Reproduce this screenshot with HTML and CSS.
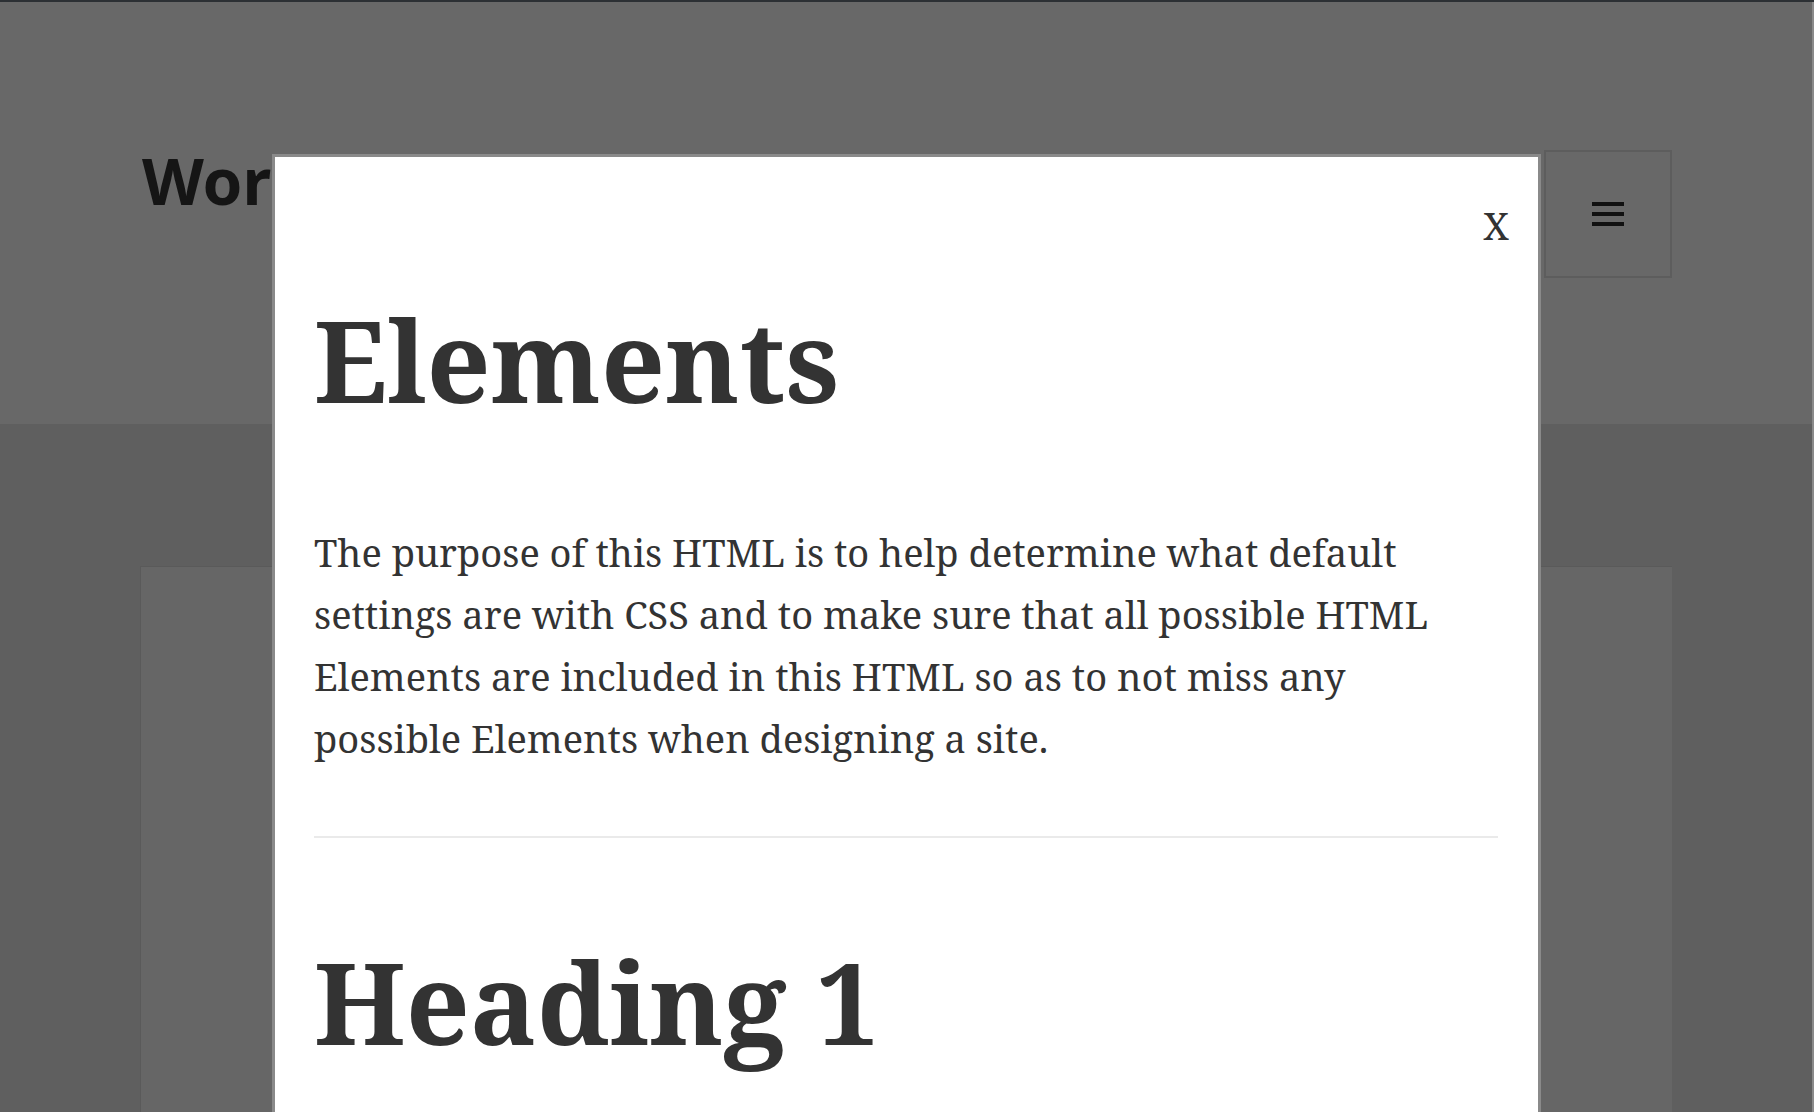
FILE: index.html
```html
<!DOCTYPE html>
<html lang="en">
<head>
<meta charset="utf-8">
<title>Elements</title>
<link rel="stylesheet" href="styles.css">
</head>
<body>
<div class="topbar"></div>
<header class="site-header">
  <p class="site-title">WordPress Theme Elements</p>
  <button class="menu-toggle" aria-label="Menu">
    <svg width="32" height="26" viewBox="0 0 32 26"><rect x="0" y="0" width="32" height="4" fill="#111"/><rect x="0" y="10" width="32" height="4" fill="#111"/><rect x="0" y="20" width="32" height="4" fill="#111"/></svg>
  </button>
</header>
<main class="site-main">
  <article class="card"></article>
</main>
<div class="modal">
  <button class="close">X</button>
  <div class="modal-body">
    <h1 class="entry-title">Elements</h1>
    <p class="lead">The purpose of this HTML is to help determine what default settings are with CSS and to make sure that all possible HTML Elements are included in this HTML so as to not miss any possible Elements when designing a site.</p>
    <hr class="rule">
    <h1 class="h1">Heading 1</h1>
  </div>
</div>
</body>
</html>
```

FILE: styles.css
```css
html, body {
  margin: 0;
  padding: 0;
  height: 100%;
  overflow: hidden;
}
body {
  background: #5f5f5f;
  font-family: "Noto Serif", "DejaVu Serif", serif;
  position: relative;
}
.topbar {
  height: 2px;
  background: #2c3034;
}
.site-header {
  height: 422px;
  background: #686868;
  display: flex;
  align-items: flex-start;
  justify-content: space-between;
  padding: 0 140px 0 142px;
  box-sizing: border-box;
  border-right: 2px solid #8a8a8a;
}
.site-title {
  margin: 139px 0 0 0;
  font-family: "Noto Sans", "Open Sans", sans-serif;
  font-weight: 700;
  font-size: 64px;
  line-height: 80px;
  color: #151515;
  white-space: nowrap;
}
.menu-toggle {
  margin-top: 148px;
  width: 128px;
  height: 128px;
  flex: none;
  background: transparent;
  border: 2px solid #5d5d5d;
  display: flex;
  align-items: flex-start;
  justify-content: center;
  padding: 50px 0 0 0;
  box-sizing: border-box;
}
.site-main {
  padding: 142px 140px 0 140px;
  border-right: 2px solid #8a8a8a;
  height: 688px;
  box-sizing: border-box;
  overflow: hidden;
}
.card {
  background: #666666;
  border-top: 1px solid #5a5a5a;
  border-left: 1px solid #5a5a5a;
  height: 546px;
}
.modal {
  position: absolute;
  left: 272px;
  top: 154px;
  bottom: 0;
  width: 1269px;
  box-sizing: border-box;
  background: #fff;
  border: 3px solid #8a8a8a;
  border-bottom: none;
  overflow: hidden;
}
.close {
  position: absolute;
  top: 48px;
  right: 29px;
  background: none;
  border: none;
  padding: 0;
  font-family: "Noto Serif", "DejaVu Serif", serif;
  font-size: 39px;
  line-height: 1;
  color: #333;
}
.modal-body {
  padding: 0 40px 0 39px;
  color: #333;
}
.entry-title {
  margin: 136px 0 0 0;
  font-size: 112px;
  line-height: 1.2;
  font-weight: 700;
}
.lead {
  margin: 95px 0 0 0;
  font-size: 38px;
  line-height: 61.7px;
}
.rule {
  margin: 67px 0 0 0;
  border: 0;
  height: 2px;
  background: #eaeaea;
}
.h1 {
  margin: 97px 0 0 0;
  font-size: 112px;
  line-height: 1.2;
  font-weight: 700;
}
```
